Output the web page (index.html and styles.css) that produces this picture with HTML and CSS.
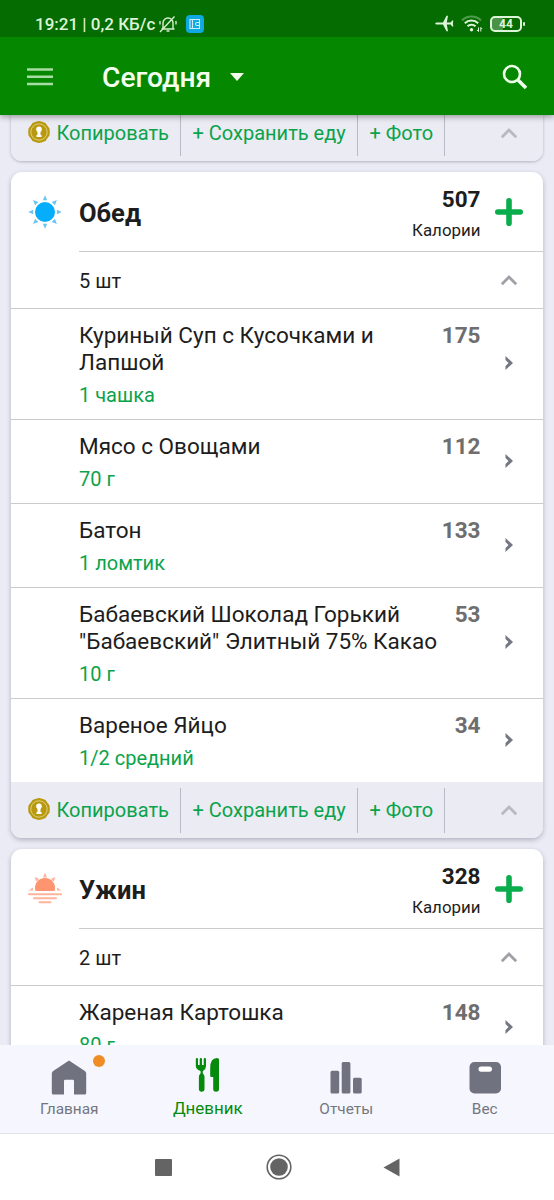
FILE: index.html
```
<!DOCTYPE html>
<html lang="ru">
<head>
<meta charset="utf-8">
<title>Сегодня</title>
<link rel="stylesheet" href="styles.css">
</head>
<body>
<svg width="0" height="0" class="defs">
  <defs>
    <symbol id="seal" viewBox="0 0 22 22">
      <path d="M11 0l3.200.8 3.300 1.200 1.700 2.500L21.500 7.500 21.800 11l-.3 3.500-2.300 3-1.700 2.500-3.300 1.200L11 22l-3.200-.8-3.300-1.200-1.700-2.500L.5 14.500.2 11l.3-3.500 2.300-3L4.500 2l3.300-1.200z" fill="#b8990f"/>
      <circle cx="11" cy="11" r="8.200" fill="none" stroke="#e9dc96" stroke-width=".8"/>
      <circle cx="11" cy="8.300" r="2.800" fill="#fff"/>
      <path d="M9.500 9h3v5h1v2h-5v-2h1z" fill="#fff"/>
    </symbol>
    <symbol id="up" viewBox="0 0 18 12"><path d="M1.800 10.200L9 3l7.200 7.200" fill="none" stroke="currentColor" stroke-width="2.800"/></symbol>
    <symbol id="next" viewBox="0 0 8 14"><path d="M.5 0L8 7 .5 14V10L3.500 7 .5 4z" fill="#757882"/></symbol>
    <symbol id="plus" viewBox="0 0 28 28"><path d="M14 2.800v22.400M2.800 14h22.400" stroke="#0aad4b" stroke-width="5.600" stroke-linecap="round"/></symbol>
  </defs>
</svg>
<div class="screen">
  <header class="top">
    <div class="status">
      <span class="clock">19:21 | 0,2 КБ/с</span>
      <svg class="bell" width="18" height="18" viewBox="0 0 18 18" fill="none" stroke="#d5f0d0" stroke-width="1.400"><path d="M4 13.500V8a5 5 0 0 1 10 0v5.500M2.500 14h13M7.500 16h3M1 17L15.500 1.500M1 6v3.500M17 6v3.500"/></svg>
      <svg class="wallet" width="18" height="18" viewBox="0 0 18 18"><rect width="18" height="18" rx="4" fill="#0fa8e0"/><path d="M4 4.500h9.500v9H4zM6.500 4.500v9M13.500 7.500H11a1.500 1.500 0 0 0 0 3h2.500" fill="none" stroke="#c8efff" stroke-width="1.100"/></svg>
      <span class="grow"></span>
      <svg class="plane" width="19" height="17" viewBox="0 0 19 17"><path d="M.3 8.500c0-.8.8-1.100 1.700-1.100h6L11.500.8h1.500l-1.200 6.600h3.800l1.600-2h1.100l-.4 3.100.4 3.100h-1.100l-1.600-2h-3.800l1.200 6.600h-1.500L8 9.600H2C1.100 9.600.3 9.300.3 8.500z" fill="#dcf5d8"/></svg>
      <svg class="wifi" width="22" height="18" viewBox="0 0 22 18" fill="none" stroke="#dcf5d8" stroke-width="2"><path d="M1 5.500a13.500 13.500 0 0 1 19 0" opacity=".35"/><path d="M3.800 8.300a9.500 9.500 0 0 1 13.400 0M6.500 11.300a5.700 5.700 0 0 1 8 0"/><circle cx="10.500" cy="14.800" r="1.700" fill="#dcf5d8" stroke="none"/><path d="M17.500 12.500v4M16 15l1.500 1.500M19.800 16.500v-4l1.300 1.500" stroke-width="1"/></svg>
      <div class="battery">44</div>
    </div>
    <div class="bar">
      <svg class="menu" width="26" height="18" viewBox="0 0 26 18"><path d="M0 1.500h26M0 8.700h26M0 15.900h26" stroke="#a9dca4" stroke-width="2.500"/></svg>
      <h1>Сегодня</h1>
      <svg class="caret" width="14" height="8" viewBox="0 0 14 8"><path d="M0 0h14L7 8z" fill="#f4fff0"/></svg>
      <span class="grow"></span>
      <svg class="search" width="26" height="26" viewBox="0 0 26 26" fill="none" stroke="#f0ffec"><circle cx="10" cy="10" r="8" stroke-width="2.600"/><path d="M15.500 15.500l8.500 8.500" stroke-width="3.500"/></svg>
    </div>
  </header>

  <main class="diary">
    <section class="card light">
      <footer class="actions">
        <a class="copy"><svg width="22" height="22"><use href="#seal"/></svg><span>Копировать</span></a>
        <a class="save"><span>+ Сохранить еду</span></a>
        <a class="photo"><span>+ Фото</span></a>
        <svg class="up" width="18" height="12"><use href="#up"/></svg>
      </footer>
    </section>

    <section class="card">
      <div class="head">
        <svg class="meal" width="34" height="34" viewBox="-17 -17 34 34"><circle r="10" fill="#05adfa"/><g fill="#68c4f3"><path id="ray" d="M-2.200-11.800L0-16.800 2.200-11.800z"/><use href="#ray" transform="rotate(45)"/><use href="#ray" transform="rotate(90)"/><use href="#ray" transform="rotate(135)"/><use href="#ray" transform="rotate(180)"/><use href="#ray" transform="rotate(225)"/><use href="#ray" transform="rotate(270)"/><use href="#ray" transform="rotate(315)"/></g></svg>
        <div class="headline">
          <h2>Обед</h2>
          <div class="total"><b>507</b><span>Калории</span></div>
          <svg class="plus" width="28" height="28"><use href="#plus"/></svg>
        </div>
      </div>
      <div class="count"><span>5 шт</span><svg class="up" width="18" height="12"><use href="#up"/></svg></div>
      <article class="item"><div class="info"><h3>Куриный Суп с Кусочками и<br>Лапшой</h3><p>1 чашка</p></div><b>175</b><svg width="8" height="14"><use href="#next"/></svg></article>
      <article class="item"><div class="info"><h3>Мясо с Овощами</h3><p>70 г</p></div><b>112</b><svg width="8" height="14"><use href="#next"/></svg></article>
      <article class="item"><div class="info"><h3>Батон</h3><p>1 ломтик</p></div><b>133</b><svg width="8" height="14"><use href="#next"/></svg></article>
      <article class="item"><div class="info"><h3>Бабаевский Шоколад Горький<br>"Бабаевский" Элитный 75% Какао</h3><p>10 г</p></div><b>53</b><svg width="8" height="14"><use href="#next"/></svg></article>
      <article class="item"><div class="info"><h3>Вареное Яйцо</h3><p>1/2 средний</p></div><b>34</b><svg width="8" height="14"><use href="#next"/></svg></article>
      <footer class="actions">
        <a class="copy"><svg width="22" height="22"><use href="#seal"/></svg><span>Копировать</span></a>
        <a class="save"><span>+ Сохранить еду</span></a>
        <a class="photo"><span>+ Фото</span></a>
        <svg class="up" width="18" height="12"><use href="#up"/></svg>
      </footer>
    </section>

    <section class="card">
      <div class="head">
        <svg class="meal" width="34" height="34" viewBox="-17 -17 34 34"><path d="M-9.500 2a10 10 0 1 1 19 0z" fill="#ff9470"/><g fill="#ffb49c"><path d="M-2-11.500L0-16.500 2-11.500z"/><path d="M-2-11.500L0-16 2-11.500z" transform="rotate(40)"/><path d="M-2-11.500L0-16 2-11.500z" transform="rotate(-40)"/><path d="M12-1.500L16.500 1.500H12zM-12-1.500L-16.500 1.500H-12z"/></g><path d="M-16 5.200h32M-11 9.200h22M-5.500 13.200h11" stroke="#ffb49c" stroke-width="2" stroke-linecap="round"/></svg>
        <div class="headline">
          <h2>Ужин</h2>
          <div class="total"><b>328</b><span>Калории</span></div>
          <svg class="plus" width="28" height="28"><use href="#plus"/></svg>
        </div>
      </div>
      <div class="count"><span>2 шт</span><svg class="up" width="18" height="12"><use href="#up"/></svg></div>
      <article class="item"><div class="info"><h3>Жареная Картошка</h3><p>80 г</p></div><b>148</b><svg width="8" height="14"><use href="#next"/></svg></article>
    </section>
  </main>

  <nav class="tabs">
    <a class="tab home"><span class="pic"><svg width="36" height="36" viewBox="0 0 36 36"><path d="M18 .5l15.500 10.200q1.700 1.100 1.700 2.800V33q0 1.500-1.500 1.500H23V21q0-1.200-1.200-1.200h-7.600Q13 19.800 13 21v13.500H2.300Q.8 34.500.8 33V13.500q0-1.700 1.700-2.800z" fill="#70737f"/></svg><i class="dot"></i></span><span>Главная</span></a>
    <a class="tab active"><span class="pic"><svg width="36" height="36" viewBox="0 0 36 36"><path d="M7 1q1 0 1 1.200V8h1.700V2.200Q9.700 1 10.900 1T12 2.200V8h1.700V2.200Q13.700 1 14.800 1T16 2.200V9q0 3.300-2.700 4.700-.6.400-.6 1.500 0 1.500 1 2.300.8.800.8 2.500v12q0 2.800-2.800 2.800T8.900 32V20q0-1.700.8-2.500 1-.8 1-2.300 0-1.100-.6-1.500-4.300-1.400-4.300-4.700V2.200Q5.800 1 7 1z" fill="#068a0b"/><path d="M29 2.500V32q0 2.800-2.900 2.800T23.200 32V20h-2q-1 0-1-1.200V11q0-10 6.800-10 2 0 2 1.500z" fill="#068a0b"/></svg></span><span>Дневник</span></a>
    <a class="tab"><span class="pic"><svg width="36" height="36" viewBox="0 0 36 36" fill="#70737f"><rect x="2.500" y="10.800" width="8.700" height="22.700" rx="1.500"/><rect x="13.700" y="2" width="8.700" height="31.500" rx="1.500"/><rect x="25" y="17.800" width="8.700" height="15.700" rx="1.500"/></svg></span><span>Отчеты</span></a>
    <a class="tab"><span class="pic"><svg width="36" height="36" viewBox="0 0 36 36"><rect x="2.500" y="2" width="31.500" height="31.500" rx="5" fill="#70737f"/><rect x="11.500" y="6.500" width="13.500" height="5.200" rx="2.600" fill="#fff"/></svg></span><span>Вес</span></a>
  </nav>
  <div class="system">
    <svg width="17" height="17" viewBox="0 0 17 17"><rect width="17" height="17" rx="1" fill="#646464"/></svg>
    <svg width="26" height="26" viewBox="0 0 26 26"><circle cx="13" cy="13" r="11.800" fill="none" stroke="#646464" stroke-width="1.600"/><circle cx="13" cy="13" r="8.800" fill="#646464"/></svg>
    <svg width="17" height="19" viewBox="0 0 17 19"><path d="M.5 9.500L16.500.5v18z" fill="#646464"/></svg>
  </div>
</div>
</body>
</html>
```

FILE: styles.css
```
* { box-sizing: border-box; }
body { margin: 0; font-family: Roboto, sans-serif; color: #1d1d1d; }
h1, h2, h3, p { margin: 0; font-weight: 400; }
svg { display: block; flex: none; }
.defs { position: absolute; }
.grow { flex: 1; }
.screen { width: 554px; height: 1200px; display: flex; flex-direction: column; overflow: hidden; background: #fff; }

.top { height: 115px; flex: none; background: #058800; position: relative; z-index: 1; box-shadow: 0 2px 6px rgba(0,0,0,.35); }
.status { height: 37px; background: #046c00; display: flex; align-items: center; padding: 10px 32px 0 35px; color: #dcf5d8; }
.clock { width: 124px; white-space: nowrap; font-size: 17px; font-weight: 500; line-height: 20px; }
.wallet { margin-left: 9px; }
.plane { margin-right: 7px; }
.wifi { margin-right: 7px; }
.battery { width: 32px; height: 16px; border: 2px solid #dcf5d8; border-radius: 5px; font-size: 12px; font-weight: 700; line-height: 12px; text-align: center; background: linear-gradient(90deg, #4a9248 40%, transparent 40%); position: relative; }
.battery::after { content: ""; position: absolute; right: -5px; top: 4px; width: 2px; height: 4px; background: #dcf5d8; border-radius: 1px; }
.bar { height: 78px; display: flex; align-items: center; padding: 2px 26px 0 27px; }
h1 { margin-left: 49px; width: 128px; padding-top: 2px; white-space: nowrap; color: #f4fff0; font-size: 28.200px; font-weight: 500; line-height: 34px; }

.diary { flex: 1; min-height: 0; overflow: hidden; background: #eaebf5; padding: 0 11px; }
.card { background: #fff; border-radius: 11px; box-shadow: 0 2px 5px rgba(60,60,80,.32); margin-bottom: 11px; }
.card.light { margin-top: -10px; box-shadow: 0 1px 3px rgba(60,60,80,.32); }
.head { height: 79px; display: flex; align-items: center; padding-left: 17px; }
.headline { flex: 1; display: flex; align-items: center; margin-left: 17px; height: 79px; padding-right: 20px; }
h2 { flex: 1; font-size: 25.500px; font-weight: 700; line-height: 30px; padding-top: 2px; }
.total { text-align: right; padding-top: 1px; }
.total b { display: block; font-size: 22.500px; line-height: 28px; }
.total span { display: block; font-size: 16.900px; line-height: 20px; margin-top: 7px; }
.plus { margin-left: 14.500px; }
.count { height: 57px; margin-left: 68px; border-top: 1px solid #c9cbcd; display: flex; align-items: center; justify-content: space-between; padding: 1px 25px 0 0; font-size: 20px; }
.count .up { margin-bottom: 2px; }
.up { color: #a0a1a6; }
.item { display: flex; border-top: 1px solid #c9cbcd; padding: 13px 30px 12px 68px; }
.info { flex: 1; }
h3 { font-size: 22.530px; line-height: 27px; white-space: nowrap; }
.item p { margin-top: 7px; font-size: 20px; line-height: 24px; color: #0aa34b; }
.item b { font-size: 22.500px; line-height: 27px; color: #6e6e6e; }
.item svg { margin: 0 0 3px 24.500px; align-self: center; }

.actions { height: 56px; display: flex; align-items: center; background: #eaebf3; border-radius: 0 0 11px 11px; color: #0aa34b; font-size: 20px; white-space: nowrap; }
.actions a { height: 45px; display: flex; align-items: center; border-right: 1px solid #b9bac3; }
.actions a svg { margin-bottom: 2px; }
.copy { width: 170px; padding-left: 17px; }
.copy span { margin-left: 6.500px; }
.save { width: 177px; padding-left: 11.500px; }
.photo { width: 87px; padding-left: 11.500px; }
.actions .up { margin: 0 25px 1px auto; color: #b9bac0; }

.tabs { height: 89px; flex: none; background: #f6f7fe; border-bottom: 1px solid #dfe2e6; display: flex; }
.tab { flex: 1; display: flex; flex-direction: column; align-items: center; padding-top: 12px; font-size: 15.400px; line-height: 20px; color: #74767e; }
.tab.active { color: #068a0b; font-size: 16.900px; }
.pic { position: relative; margin-bottom: 6px; }
.active .pic { margin-bottom: 5px; }
.home .pic, .tab:nth-child(n+3) .pic { padding-top: 3px; margin-bottom: 3px; }
.dot { position: absolute; left: 42px; top: -2px; width: 12px; height: 12px; border-radius: 50%; background: #f08c24; }
.system { height: 66px; display: flex; align-items: center; padding-left: 155px; }
.system svg:nth-child(2) { margin-left: 94px; }
.system svg:nth-child(3) { margin-left: 91px; }
```
